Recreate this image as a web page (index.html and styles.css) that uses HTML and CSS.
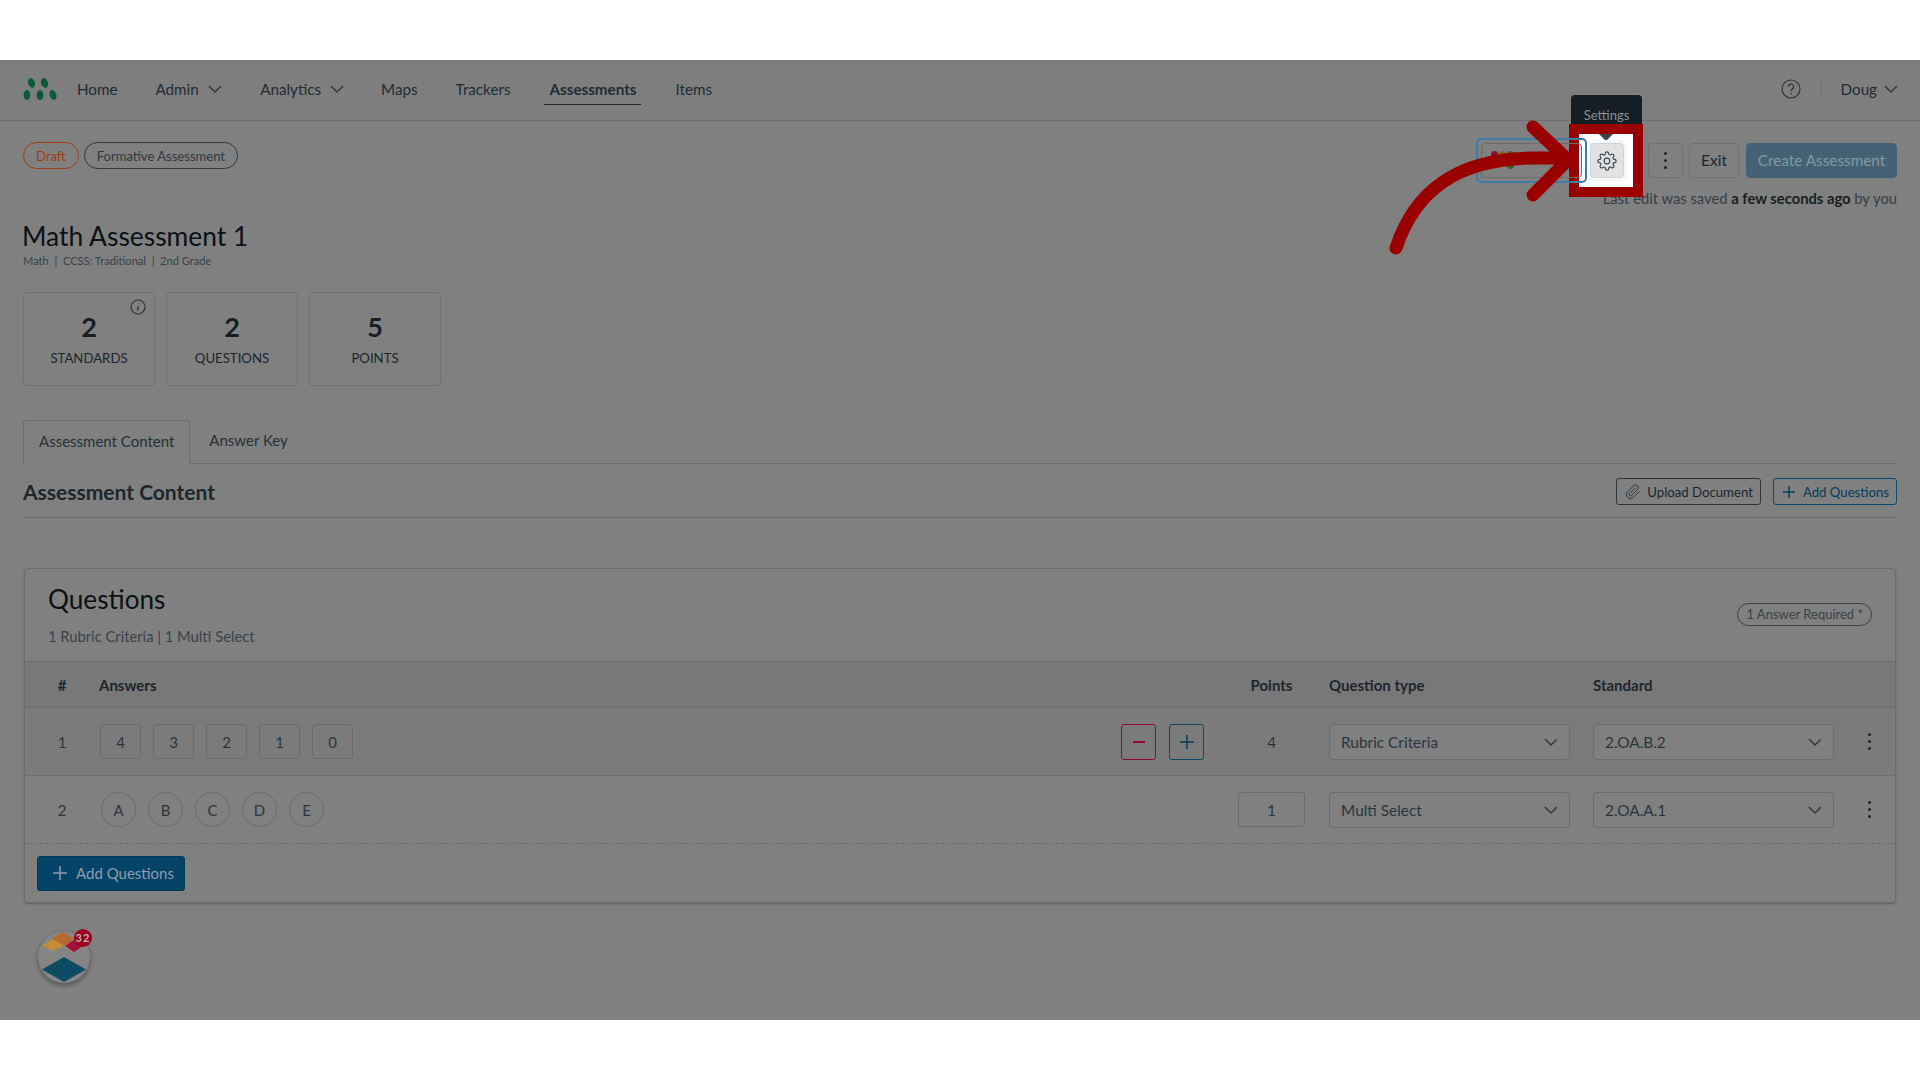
FILE: index.html
```html
<!DOCTYPE html>
<html lang="en">
<head>
    <meta charset="UTF-8">
    <title>Math Assessment 1</title>
    <link rel="stylesheet" href="styles.css">
</head>
<body>
<div class="page">
    <header class="nav">
        <svg class="logo" width="36" height="24" viewBox="0 0 36 24">
            <ellipse cx="9.5" cy="6" rx="3.4" ry="5" transform="rotate(-18 9.500 6)"/>
            <ellipse cx="22.5" cy="6" rx="3.4" ry="5" transform="rotate(-18 22.500 6)"/>
            <ellipse cx="5" cy="18" rx="3.4" ry="5"/>
            <ellipse cx="18" cy="18" rx="3.4" ry="5"/>
            <ellipse cx="31" cy="18" rx="3.4" ry="5" transform="rotate(-18 31 18)"/>
        </svg>
        <a class="nav-link nav-home">Home</a>
        <a class="nav-link nav-admin">Admin
            <svg class="chev" width="14" height="14" viewBox="0 0 14 14"><path d="M1 4l6 6 6-6"/></svg>
        </a>
        <a class="nav-link nav-analytics">Analytics
            <svg class="chev" width="14" height="14" viewBox="0 0 14 14"><path d="M1 4l6 6 6-6"/></svg>
        </a>
        <a class="nav-link nav-maps">Maps</a>
        <a class="nav-link nav-trackers">Trackers</a>
        <a class="nav-link nav-active">Assessments</a>
        <a class="nav-link nav-items">Items</a>
        <div class="nav-right">
            <svg class="help" width="20" height="20" viewBox="0 0 20 20">
                <circle cx="10" cy="10" r="9"/>
                <path d="M7.4 7.8a2.6 2.6 0 1 1 3.9 2.2c-.9.5-1.3 1-1.3 2"/>
                <circle class="help-dot" cx="10" cy="14.6" r="0.8"/>
            </svg>
            <span class="nav-divider"></span>
            <a class="nav-user">Doug
                <svg class="chev" width="14" height="14" viewBox="0 0 14 14"><path d="M1 4l6 6 6-6"/></svg>
            </a>
        </div>
    </header>

    <main class="content">
        <div class="head">
            <div class="badges">
                <span class="badge badge-draft">Draft</span>
                <span class="badge">Formative Assessment</span>
            </div>
            <div class="head-right">
                <div class="actions">
                    <div class="versions">
                        <span class="versions-inner">
                            <i class="dot dot-red"></i><i class="dot dot-orange"></i><i class="dot dot-green"></i>
                        </span>
                    </div>
                    <div class="gear-wrap">
                        <div class="tooltip">Settings</div>
                        <div class="spot"></div>
                        <button class="gear-btn">
                            <svg width="20" height="20" viewBox="0 0 24 24">
                                <circle cx="12" cy="12" r="3.4"/>
                                <path d="M19.4 15a1.65 1.65 0 0 0 .33 1.82l.06.06a2 2 0 0 1 0 2.83 2 2 0 0 1-2.83 0l-.06-.06a1.65 1.65 0 0 0-1.82-.33 1.65 1.65 0 0 0-1 1.51V21a2 2 0 0 1-2 2 2 2 0 0 1-2-2v-.09A1.65 1.65 0 0 0 9 19.4a1.65 1.65 0 0 0-1.82.33l-.06.06a2 2 0 0 1-2.83 0 2 2 0 0 1 0-2.83l.06-.06a1.65 1.65 0 0 0 .33-1.82 1.65 1.65 0 0 0-1.51-1H3a2 2 0 0 1-2-2 2 2 0 0 1 2-2h.09A1.65 1.65 0 0 0 4.6 9a1.65 1.65 0 0 0-.33-1.82l-.06-.06a2 2 0 0 1 0-2.83 2 2 0 0 1 2.83 0l.06.06a1.65 1.65 0 0 0 1.82.33H9a1.65 1.65 0 0 0 1-1.51V3a2 2 0 0 1 2-2 2 2 0 0 1 2 2v.09a1.65 1.65 0 0 0 1 1.51 1.65 1.65 0 0 0 1.82-.33l.06-.06a2 2 0 0 1 2.83 0 2 2 0 0 1 0 2.83l-.06.06a1.65 1.65 0 0 0-.33 1.82V9a1.65 1.65 0 0 0 1.51 1H21a2 2 0 0 1 2 2 2 2 0 0 1-2 2h-.09a1.65 1.65 0 0 0-1.51 1z"/>
                            </svg>
                        </button>
                    </div>
                    <button class="btn btn-kebab"><span class="kebab"><i></i><i></i><i></i></span></button>
                    <button class="btn btn-exit">Exit</button>
                    <button class="btn btn-create">Create Assessment</button>
                </div>
                <p class="saved">Last edit was saved <strong>a few seconds ago</strong> by you</p>
            </div>
        </div>

        <h1 class="title">Math Assessment 1</h1>
        <p class="subtitle">Math&nbsp; |&nbsp; CCSS: Traditional&nbsp; |&nbsp; 2nd Grade</p>

        <div class="stats">
            <div class="stat">
                <svg class="stat-info" width="16" height="16" viewBox="0 0 16 16">
                    <circle cx="8" cy="8" r="7"/>
                    <path d="M8.6 7l-1.2 4.6M8.9 4.2v.6"/>
                </svg>
                <b>2</b><span>STANDARDS</span>
            </div>
            <div class="stat"><b>2</b><span>QUESTIONS</span></div>
            <div class="stat"><b>5</b><span>POINTS</span></div>
        </div>

        <div class="tabs">
            <a class="tab tab-active">Assessment Content</a>
            <a class="tab">Answer Key</a>
        </div>

        <div class="section-head">
            <h2>Assessment Content</h2>
            <div class="section-btns">
                <button class="outline-btn">
                    <svg width="16" height="16" viewBox="0 0 24 24"><path d="M21.44 11.05l-9.19 9.19a6 6 0 0 1-8.49-8.49l9.19-9.19a4 4 0 0 1 5.66 5.66l-9.2 9.19a2 2 0 0 1-2.83-2.83l8.49-8.48"/></svg>
                    Upload Document
                </button>
                <button class="outline-btn outline-blue">
                    <svg width="14" height="14" viewBox="0 0 14 14"><path d="M7 1v12M1 7h12"/></svg>
                    Add Questions
                </button>
            </div>
        </div>

        <section class="card">
            <div class="card-head">
                <div class="card-title">
                    <h3>Questions</h3>
                    <p>1 Rubric Criteria | 1 Multi Select</p>
                </div>
                <span class="required">1 Answer Required *</span>
            </div>

            <div class="row row-header">
                <div class="c-num">#</div>
                <div>Answers</div>
                <div class="c-points">Points</div>
                <div class="c-field">Question type</div>
                <div class="c-field">Standard</div>
                <div></div>
            </div>

            <div class="row row-one">
                <div class="c-num">1</div>
                <div class="answers">
                    <div class="answer-list">
                        <span class="box">4</span><span class="box">3</span><span class="box">2</span><span class="box">1</span><span class="box">0</span>
                    </div>
                    <div class="steppers">
                        <button class="step step-minus"><svg width="14" height="14" viewBox="0 0 14 14"><path d="M1 7h12"/></svg></button>
                        <button class="step step-plus"><svg width="16" height="16" viewBox="0 0 16 16"><path d="M8 1v14M1 8h14"/></svg></button>
                    </div>
                </div>
                <div class="c-points">4</div>
                <div class="c-field"><div class="select">Rubric Criteria<svg class="chev" width="14" height="14" viewBox="0 0 14 14"><path d="M1 4l6 6 6-6"/></svg></div></div>
                <div class="c-field"><div class="select">2.OA.B.2<svg class="chev" width="14" height="14" viewBox="0 0 14 14"><path d="M1 4l6 6 6-6"/></svg></div></div>
                <div class="c-more"><span class="kebab"><i></i><i></i><i></i></span></div>
            </div>

            <div class="row row-two">
                <div class="c-num">2</div>
                <div class="answer-list answer-circles">
                    <span class="circle">A</span><span class="circle">B</span><span class="circle">C</span><span class="circle">D</span><span class="circle">E</span>
                </div>
                <div class="c-points"><div class="points-input">1</div></div>
                <div class="c-field"><div class="select">Multi Select<svg class="chev" width="14" height="14" viewBox="0 0 14 14"><path d="M1 4l6 6 6-6"/></svg></div></div>
                <div class="c-field"><div class="select">2.OA.A.1<svg class="chev" width="14" height="14" viewBox="0 0 14 14"><path d="M1 4l6 6 6-6"/></svg></div></div>
                <div class="c-more"><span class="kebab"><i></i><i></i><i></i></span></div>
            </div>

            <div class="card-foot">
                <button class="add-btn">
                    <svg width="16" height="16" viewBox="0 0 16 16"><path d="M8 1v14M1 8h14"/></svg>
                    Add Questions
                </button>
            </div>
        </section>

        <div class="launcher">
            <svg width="52" height="52" viewBox="0 0 52 52">
                <path fill="#c08f33" d="M4 14.500L15 8l12 6.500L15 20z"/>
                <path fill="#b5682f" d="M14 7.500L25 1l11 7-9 7z"/>
                <path fill="#a40f3d" d="M27 15l9-6 9 6-9 6z"/>
                <path fill="#0e4c65" d="M4 38.500L26 26l22 12.500L26 51z"/>
            </svg>
            <span class="launcher-count">32</span>
        </div>
    </main>

    <svg class="arrow" width="200" height="140" viewBox="0 0 200 140">
        <path d="M16 128C35 70 78 38 155 38L186 38M153 7L188 40L153 75"/>
    </svg>
</div>
</body>
</html>
```

FILE: styles.css
```css
* {
    box-sizing: border-box;
}
body {
    margin: 0;
    background: #fff;
    font-family: Lato, "Open Sans", sans-serif;
    color: #1d262d;
}
button {
    font-family: inherit;
}
h1, h2, h3, p {
    margin: 0;
    font-weight: 400;
}
.page {
    position: relative;
    margin-top: 60px;
    height: 960px;
    background: #808080;
    overflow: hidden;
}

/* nav */
.nav {
    position: relative;
    display: flex;
    align-items: center;
    height: 61px;
    border-bottom: 1px solid #6f6f6f;
    padding-left: 22px;
    padding-bottom: 2px;
    font-size: 15.2px;
    background: #7e7e7e;
}
.logo {
    fill: #0b5a3a;
    flex: none;
}
.nav-link {
    display: flex;
    align-items: center;
    gap: 9px;
    height: 31px;
    color: #222c34;
    white-space: nowrap;
}
.nav-home { margin-left: 19px; }
.nav-admin { margin-left: 38px; }
.nav-analytics { margin-left: 38.5px; }
.nav-maps { margin-left: 37px; }
.nav-trackers { margin-left: 38px; }
.nav-active {
    margin-left: 34px;
    padding: 0 5px;
    font-weight: 700;
    border-bottom: 1px solid #1d262d;
}
.nav-items { margin-left: 34px; }
.chev {
    flex: none;
    fill: none;
    stroke: #2c363e;
    stroke-width: 1.3;
}
.nav-right {
    margin-left: auto;
    display: flex;
    align-items: center;
    padding-right: 22px;
}
.help {
    fill: none;
    stroke: #2c363e;
    stroke-width: 1.2;
}
.help-dot {
    fill: #2c363e;
    stroke: none;
}
.nav-divider {
    width: 1px;
    height: 22px;
    background: #707070;
    margin: 0 19px 0 20px;
}
.nav-user {
    display: flex;
    align-items: center;
    gap: 7px;
    color: #222c34;
}

/* page head */
.content {
    padding: 22px 23px 0;
}
.head {
    display: flex;
    justify-content: space-between;
    align-items: flex-start;
}
.badges {
    display: flex;
    gap: 5px;
    margin-top: -1px;
}
.badge {
    display: flex;
    align-items: center;
    height: 27px;
    padding: 0 12px;
    border: 1px solid #2f3a42;
    border-radius: 14px;
    font-size: 13.05px;
    color: #2f3a42;
    white-space: nowrap;
}
.badge-draft {
    border-color: #9e3d1c;
    color: #9e3d1c;
}
.head-right {
    display: flex;
    flex-direction: column;
    align-items: flex-end;
}
.actions {
    display: flex;
    align-items: center;
    height: 35px;
}
.versions {
    position: relative;
    z-index: 2;
    width: 111px;
    height: 45px;
    padding: 3px;
    border: 2px solid #3f7da6;
    border-radius: 5px;
}
.versions-inner {
    display: flex;
    align-items: flex-start;
    gap: 1px;
    height: 100%;
    padding: 7px 0 0 9px;
    border: 1px solid #6c6c6c;
    border-radius: 4px;
}
.dot {
    width: 7px;
    height: 7px;
    border-radius: 50%;
}
.dot-red { background: #8c1030; }
.dot-orange { background: #8f5f1a; }
.dot-green {
    height: 18px;
    border-radius: 4px;
    background: #2f6a2c;
}
.gear-wrap {
    position: relative;
    width: 34px;
    height: 35px;
    margin-left: 3px;
}
.tooltip {
    position: absolute;
    left: -19px;
    top: -48px;
    width: 71px;
    height: 44px;
    padding-top: 12px;
    background: #161e25;
    border-radius: 4px 4px 0 0;
    color: #8b8f93;
    font-size: 13px;
    text-align: center;
}
.spot {
    position: absolute;
    z-index: 1;
    left: -21px;
    top: -19px;
    width: 74px;
    height: 73px;
    border: 10px solid #9b0000;
    background: #fff;
}
.spot::after {
    content: "";
    position: absolute;
    left: 20px;
    top: 0;
    border: 7px solid transparent;
    border-top-color: #39454e;
    border-bottom: 0;
}
.gear-btn {
    position: relative;
    z-index: 2;
    display: flex;
    align-items: center;
    justify-content: center;
    width: 34px;
    height: 35px;
    padding: 0;
    background: #e2e2e2;
    border: 1px solid #d3d3d3;
    border-radius: 4px;
    box-shadow: 0 0 0 3px #f3f7fb;
}
.gear-btn svg {
    fill: none;
    stroke: #3c4750;
    stroke-width: 1.4;
}
.btn {
    height: 35px;
    background: transparent;
    border: 1px solid #727272;
    border-radius: 4px;
    font-size: 15.5px;
    color: #1d262d;
    padding: 0 0 2px;
}
.btn-kebab {
    display: flex;
    align-items: center;
    justify-content: center;
    width: 35px;
    margin-left: 24px;
    padding: 0;
}
.kebab {
    display: flex;
    flex-direction: column;
    gap: 4px;
}
.kebab i {
    width: 3px;
    height: 3px;
    border-radius: 50%;
    background: #1d262d;
}
.btn-exit {
    width: 50px;
    margin-left: 6px;
}
.btn-create {
    width: 151px;
    margin-left: 7px;
    font-size: 15.3px;
    background: #456274;
    border-color: #456274;
    color: #84989f;
}
.saved {
    margin-top: 10px;
    font-size: 14.75px;
    line-height: 20px;
    color: #353f47;
}
.saved strong {
    color: #161e24;
    font-weight: 700;
}
.title {
    margin: 11px 0 0 -1px;
    font-size: 26.4px;
    line-height: 34px;
    color: #0c1115;
}
.subtitle {
    margin-top: 1px;
    font-size: 11.1px;
    line-height: 14px;
    color: #39434a;
}

/* stat cards */
.stats {
    display: flex;
    gap: 11px;
    margin-top: 24px;
}
.stat {
    position: relative;
    display: flex;
    flex-direction: column;
    align-items: center;
    width: 132px;
    height: 94px;
    border: 1px solid #727272;
    border-radius: 3px;
}
.stat b {
    margin-top: 17px;
    font-size: 27px;
    line-height: 34px;
    font-weight: 700;
    color: #161e24;
}
.stat span {
    margin-top: 5px;
    font-size: 13.2px;
    line-height: 18px;
    color: #1d262d;
}
.stat-info {
    position: absolute;
    right: 8px;
    top: 6px;
    fill: none;
    stroke: #2c363e;
    stroke-width: 1.2;
}

/* tabs */
.tabs {
    display: flex;
    margin-top: 34px;
    border-bottom: 1px solid #6c6c6c;
    height: 44px;
}
.tab {
    padding: 0 19px;
    line-height: 41px;
    font-size: 15px;
    color: #26313a;
}
.tab-active {
    padding: 0 15px;
    height: 44px;
    border: 1px solid #6c6c6c;
    border-bottom: 1px solid #808080;
    border-radius: 3px 3px 0 0;
}

.section-head {
    display: flex;
    justify-content: space-between;
    align-items: center;
    margin-top: 14px;
    padding-bottom: 12px;
    border-bottom: 1px solid #6c6c6c;
}
.section-head h2 {
    font-size: 21px;
    font-weight: 700;
    color: #1d262d;
}
.section-btns {
    display: flex;
    gap: 12px;
}
.outline-btn {
    display: flex;
    align-items: center;
    gap: 6px;
    height: 27px;
    padding: 0 7px 0 8px;
    background: transparent;
    border: 1px solid #2c363e;
    border-radius: 3px;
    font-size: 13.2px;
    color: #1d262d;
    white-space: nowrap;
}
.outline-btn svg {
    fill: none;
    stroke: #2c363e;
    stroke-width: 1.5;
}
.outline-blue {
    gap: 7px;
    border-color: #0c4a6e;
    color: #083c59;
}
.outline-blue svg {
    stroke: #083c59;
}

/* questions card */
.card {
    margin: 50px 1px 0;
    border: 1px solid #6c6c6c;
    border-radius: 4px;
    box-shadow: 0 1px 2px rgba(0, 0, 0, 0.25);
}
.card-head {
    display: flex;
    justify-content: space-between;
    align-items: center;
    height: 92px;
    padding: 0 23px 0 23px;
}
.card-title {
    padding-bottom: 3px;
}
.card-head h3 {
    font-size: 26.2px;
    line-height: 34px;
    color: #0c1115;
}
.card-head p {
    margin-top: 10px;
    font-size: 14.75px;
    line-height: 20px;
    color: #39434a;
}
.required {
    display: flex;
    align-items: center;
    height: 23px;
    padding: 0 8px;
    margin-bottom: 2px;
    border: 1px solid #39434a;
    border-radius: 12px;
    font-size: 13px;
    color: #39434a;
    white-space: nowrap;
}
.row {
    display: grid;
    grid-template-columns: 74px 1fr 67px 265px 264px 61px;
    align-items: center;
    border-top: 1px solid #6f6f6f;
    font-size: 15px;
    color: #2c363e;
}
.row-header {
    height: 46px;
    background: #787878;
    font-weight: 700;
    color: #1d262d;
}
.row-one {
    height: 68px;
    background: #7b7b7b;
}
.row-two {
    height: 68px;
}
.c-num {
    text-align: center;
}
.c-points {
    text-align: center;
}
.c-field {
    margin-left: 24px;
}
.c-field + .c-field {
    margin-left: 23px;
}
.c-more {
    display: flex;
    justify-content: center;
    padding-left: 9px;
}
.answers {
    display: flex;
    justify-content: space-between;
    align-items: center;
    padding-right: 34px;
    padding-left: 1px;
}
.answer-list {
    display: flex;
    gap: 12px;
}
.answer-circles {
    padding-left: 2px;
}
.box, .circle {
    display: flex;
    align-items: center;
    justify-content: center;
    width: 41px;
    height: 35px;
    border: 1px solid #6c6c6c;
    border-radius: 3px;
    color: #2c363e;
}
.circle {
    width: 35px;
    border-radius: 50%;
}
.steppers {
    display: flex;
    gap: 13px;
}
.step {
    display: flex;
    align-items: center;
    justify-content: center;
    width: 35px;
    height: 36px;
    padding: 0;
    background: transparent;
    border: 1px solid #8c0e2c;
    border-radius: 3px;
}
.step svg {
    fill: none;
    stroke: #8c0e2c;
    stroke-width: 2;
}
.step-plus {
    border-color: #0c4a6e;
}
.step-plus svg {
    stroke: #083c59;
    stroke-width: 1.500;
}
.select {
    display: flex;
    justify-content: space-between;
    align-items: center;
    width: 241px;
    height: 36px;
    padding: 0 11px;
    background: #808080;
    border: 1px solid #6c6c6c;
    border-radius: 3px;
    font-size: 15.4px;
    color: #2c363e;
}
.points-input {
    display: flex;
    align-items: center;
    justify-content: center;
    height: 35px;
    border: 1px solid #6c6c6c;
    border-radius: 3px;
}
.card-foot {
    border-top: 1px dashed #6c6c6c;
    padding: 12px 12px 11px;
}
.add-btn {
    display: flex;
    align-items: center;
    gap: 8px;
    width: 148px;
    height: 35px;
    padding: 0 0 2px 14px;
    background: #044466;
    border: 1px solid #003a58;
    border-radius: 3px;
    font-size: 15px;
    color: #8b9eab;
}
.add-btn svg {
    fill: none;
    stroke: #8b9eab;
    stroke-width: 1.500;
}

/* chat launcher */
.launcher {
    position: relative;
    width: 52px;
    height: 52px;
    margin: 28px 0 0 15px;
    background: #858585;
    border-radius: 50%;
    box-shadow: 0 2px 5px rgba(0, 0, 0, 0.4);
}
.launcher-count {
    position: absolute;
    left: 36px;
    top: -2px;
    width: 18px;
    height: 18px;
    background: #9c0020;
    border-radius: 50%;
    font-size: 11px;
    font-weight: 700;
    letter-spacing: 1px;
    line-height: 18px;
    text-align: center;
    color: #b5b5b5;
}

/* callout arrow */
.arrow {
    position: absolute;
    z-index: 5;
    left: 1380px;
    top: 60px;
    fill: none;
    stroke: #9b0000;
    stroke-width: 13;
    stroke-linecap: round;
    stroke-linejoin: miter;
}
```
